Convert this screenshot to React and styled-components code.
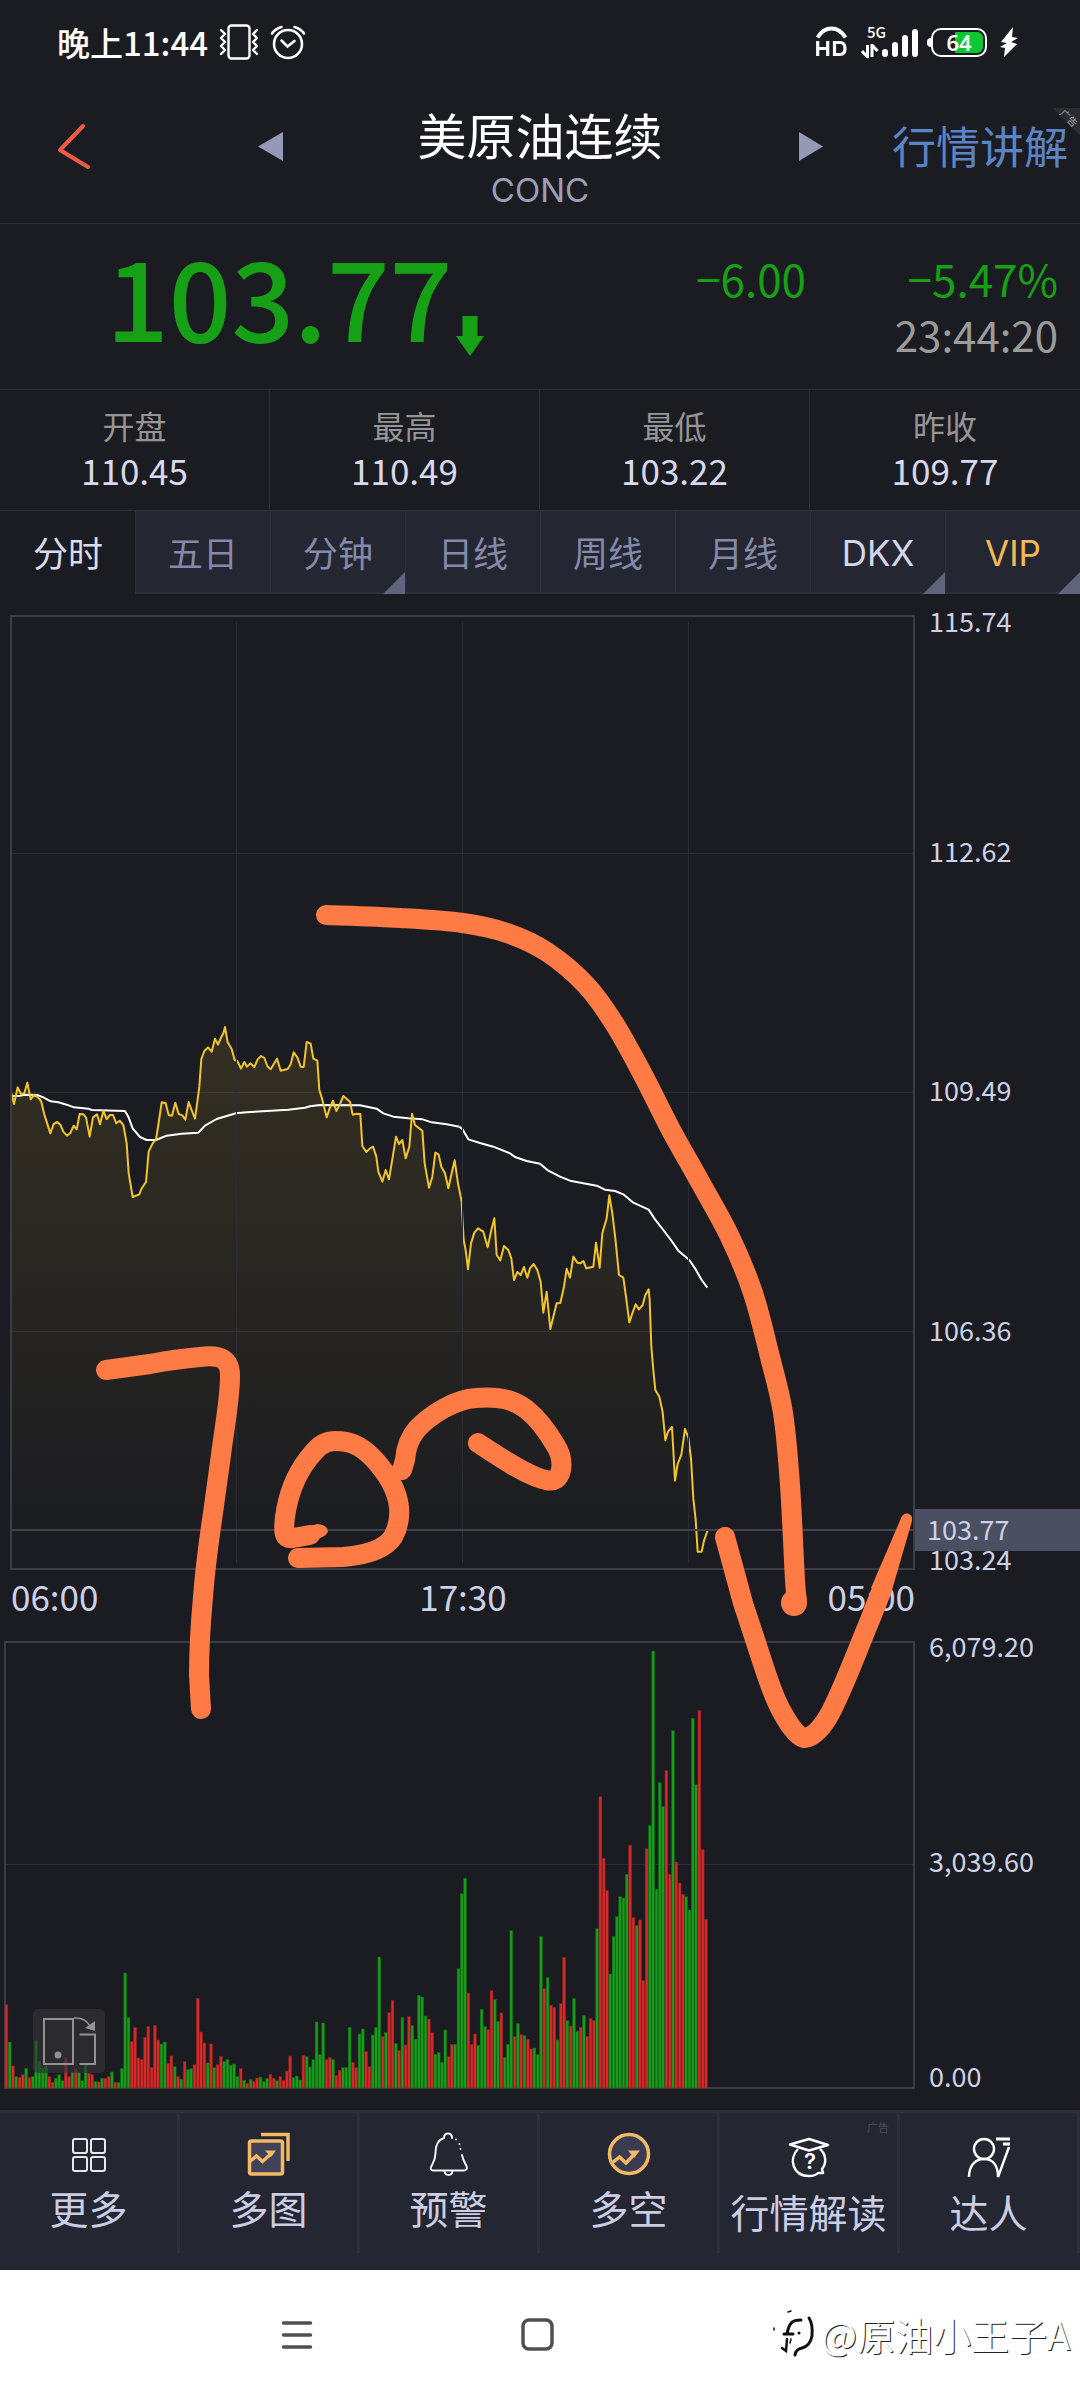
import React from "react";
import styled, { createGlobalStyle, css } from "styled-components";

const c = {
  bg: "#1b1c21",
  panel: "#242632",
  line: "#2e2f38",
  frame: "#3b3c49",
  grid: "#2b2c34",
  text: "#cdd1e8",
  muted: "#858aab",
  grey: "#959595",
  green: "#16a016",
  red: "#d22828",
  gold: "#f2ba63",
  ink: "#ff7b45",
};

const GlobalStyle = createGlobalStyle`
  * { box-sizing: border-box; }
  body {
    margin: 0;
    background: ${c.bg};
    color: ${c.text};
    font-family: "Noto Sans CJK SC", "Noto Sans", sans-serif;
  }
  button {
    margin: 0;
    padding: 0;
    border: 0;
    background: none;
    color: inherit;
    font: inherit;
    cursor: pointer;
  }
  svg { display: block; }
`;

const Screen = styled.div`
  display: flex;
  flex-direction: column;
  min-height: 100vh;
  background: ${c.bg};
`;

/* ---------- status bar ---------- */

const StatusBar = styled.div`
  display: flex;
  justify-content: space-between;
  align-items: center;
  height: 84px;
  padding: 0 61px 0 57px;
  color: #fff;
`;

const StatusGroup = styled.div`
  display: flex;
  align-items: center;
  gap: ${(p) => p.$gap}px;
`;

const Clock = styled.span`
  font-size: 33px;
  font-weight: 500;
  line-height: 40px;
`;

const VibrateIcon = () => (
  <svg width="40" height="36" viewBox="0 0 40 36" fill="none" stroke="#fff" strokeWidth="2.4" strokeLinejoin="round" strokeLinecap="round">
    <rect x="9.5" y="1.5" width="21" height="33" rx="3" />
    <path d="M2 6l4 4-4 4 4 4-4 4 4 4-4 4M38 6l-4 4 4 4-4 4 4 4-4 4 4 4" />
  </svg>
);

const AlarmIcon = () => (
  <svg width="36" height="36" viewBox="0 0 36 36" fill="none" stroke="#fff" strokeWidth="2.6" strokeLinecap="round">
    <circle cx="18" cy="20" r="14" />
    <path d="M11.5 16.5L17.5 22.5L24.500 17M2 9.500Q5 5 11.500 3M34 9.500Q31 5 24.500 3" />
  </svg>
);

const HdIcon = () => (
  <svg width="34" height="32" viewBox="0 0 34 32">
    <path d="M2.500 11.500Q8 2.500 16.500 2.500T30.500 11.500" fill="none" stroke="#fff" strokeWidth="4" />
    <path d="M2.700 15V30M12.700 15V30M2.700 22.500H12.700M19.500 16.500V28.500H25Q30 28.500 30 22.500T25 16.500Z" fill="none" stroke="#fff" strokeWidth="3.200" />
  </svg>
);

const Signal = styled.div`
  display: grid;
  grid-template-columns: 20px 36px;
  align-items: end;
  width: 58px;
`;

const Generation = styled.span`
  grid-column: 1 / -1;
  height: 12px;
  padding-left: 6px;
  margin-bottom: -12px;
  font-size: 15px;
  font-weight: 500;
  line-height: 12px;
`;

const Battery = styled.div`
  display: flex;
  align-items: center;
  justify-content: center;
  position: relative;
  width: 56px;
  height: 29px;
  border: 2px solid #fff;
  border-radius: 10px;
  font-family: "Noto Sans", sans-serif;
  font-size: 22px;
  font-weight: 600;
  line-height: 22px;
  background: linear-gradient(90deg, transparent 20px, #0bc832 20px) content-box;
  padding: 2px;

  &::before {
    content: "";
    position: absolute;
    left: -6px;
    top: 8px;
    width: 4px;
    height: 9px;
    border-radius: 4px 0 0 4px;
    background: #fff;
  }
`;

/* ---------- title bar ---------- */

const TitleBar = styled.header`
  display: grid;
  grid-template-columns: 1fr 120px 420px 120px 1fr;
  align-items: center;
  position: relative;
  height: 140px;
  padding-bottom: 13px;
  border-bottom: 1px solid ${c.line};
`;

const BackButton = styled.button`
  justify-self: start;
  padding: 8px 24px 8px 56px;
`;

const StepButton = styled.button`
  justify-self: center;
  padding: 12px;
`;

const TitleStack = styled.div`
  align-self: end;
  display: flex;
  flex-direction: column;
  align-items: center;
  gap: 8px;
`;

const Title = styled.h1`
  margin: 0;
  color: #fff;
  font-size: 49px;
  font-weight: 400;
  line-height: 56px;
`;

const Ticker = styled.span`
  color: #9a9fb8;
  font-family: Inter, sans-serif;
  font-size: 33px;
  line-height: 40px;
`;

const LessonLink = styled.a`
  justify-self: end;
  padding: 0 12px 4px 0;
  color: #5b84c6;
  font-size: 44px;
  line-height: 56px;
  text-decoration: none;
  white-space: nowrap;
`;

const CornerAd = styled.span`
  position: absolute;
  top: 24px;
  right: 0;
  width: 28px;
  height: 28px;
  background: linear-gradient(45deg, transparent 50%, #2c2d32 50%);
  color: #a2a2a6;
  font-size: 10px;
  line-height: 12px;

  & > span {
    position: absolute;
    top: 4px;
    left: 7px;
    transform: rotate(45deg);
    white-space: nowrap;
  }
`;

/* ---------- quote ---------- */

const Quote = styled.section`
  display: flex;
  justify-content: space-between;
  align-items: flex-start;
  padding: 20px 22px 27px 106px;
  color: ${c.green};
`;

const Price = styled.div`
  display: flex;
  align-items: flex-end;
  font-size: 110px;
  font-weight: 500;
  line-height: 100px;
`;

const DownArrow = styled.svg`
  width: 28px;
  height: 40px;
  margin: 0 0 -12px 4px;
`;

const Change = styled.div`
  display: grid;
  grid-template-columns: auto 252px;
  grid-auto-rows: 56px;
  padding-top: 6px;
  text-align: right;
  font-size: 44px;
  line-height: 56px;
`;

const QuoteTime = styled.time`
  grid-column: 1 / -1;
  color: #9b9b9b;
  font-size: 42px;
`;

const Stats = styled.dl`
  display: grid;
  grid-template-columns: repeat(4, 1fr);
  margin: 0;
  border-top: 1px solid ${c.line};
  border-bottom: 1px solid ${c.line};
`;

const Stat = styled.div`
  padding: 15px 0;
  text-align: center;
  border-right: 1px solid ${c.line};

  &:last-child { border-right: 0; }
`;

const StatLabel = styled.dt`
  color: ${c.grey};
  font-size: 32px;
  line-height: 40px;
`;

const StatValue = styled.dd`
  margin: 0;
  color: #d8d9ee;
  font-size: 35px;
  line-height: 50px;
`;

/* ---------- tabs ---------- */

const Tabs = styled.nav`
  display: grid;
  grid-template-columns: repeat(8, 1fr);
`;

const Tab = styled.button`
  position: relative;
  height: 83px;
  border-left: 1px solid ${c.line};
  border-bottom: 2px solid ${c.line};
  background: ${c.panel};
  color: ${(p) => p.$color || c.muted};
  font-size: 35px;
  line-height: 44px;
  ${(p) => p.$latin && css`
    padding-top: 3px;
    font-family: Inter, sans-serif;
  `}
  ${(p) => p.$active && css`
    border-color: transparent;
    background: ${c.bg};
    color: #dadcef;
  `}
  ${(p) => p.$menu && css`
    &::after {
      content: "";
      position: absolute;
      right: 0;
      bottom: -2px;
      border: 11px solid transparent;
      border-right-color: #5f637c;
      border-bottom-color: #5f637c;
    }
  `}
`;

/* ---------- charts ---------- */

const Charts = styled.main`
  position: relative;
`;

const PlotRow = styled.section`
  display: grid;
  grid-template-columns: minmax(0, 1fr) 165px;
  position: relative;
`;

const Plot = styled.svg`
  width: 100%;
  height: ${(p) => p.$height}px;
`;

const PriceAxis = styled.div`
  display: grid;
  grid-template-rows: 1fr 2fr 2fr 2fr 1fr;
  align-items: center;
  padding: 17px 0 7px 14px;
  font-size: 27px;
  line-height: 20px;

  & > :first-child { align-self: start; }
  & > :last-child { align-self: end; }
`;

const VolumeAxis = styled.div`
  display: flex;
  flex-direction: column;
  justify-content: space-between;
  padding: 16px 0 24px 14px;
  font-size: 27px;
  line-height: 20px;
`;

const LastPrice = styled.div`
  position: absolute;
  right: 0;
  bottom: 25px;
  width: 165px;
  height: 42px;
  padding-left: 12px;
  background: #4a4f62;
  font-size: 27px;
  line-height: 40px;
`;

const TimeAxis = styled.div`
  display: grid;
  grid-template-columns: repeat(3, 1fr);
  padding: 0 165px 4px 11px;
  font-size: 35px;
  line-height: 40px;

  & > :nth-child(2) { text-align: center; }
  & > :last-child { text-align: right; }
`;

const Annotation = styled.svg`
  position: absolute;
  inset: 0;
  width: 100%;
  height: 100%;
  pointer-events: none;
`;

const RotateButton = styled.button`
  position: absolute;
  left: 33px;
  bottom: 37px;
  width: 72px;
  height: 64px;
  border-radius: 5px;
  background: rgba(50, 50, 54, 0.66);
`;

// Series points are sampled on a grid of three units per pixel.
const PRICE =
  "34,338 42,372 53,322 63,342 73,340 82,308 92,358 103,344 118,356 124,365 132,400 151,460 161,432 172,426 181,434 190,455 201,467 211,459 221,437 230,448 239,402 250,403 258,412 269,470 279,412 291,403 300,433 310,393 320,417 330,405 339,405 349,430 359,422 370,435 380,490 386,580 398,651 418,643 424,627 438,606 446,515 458,490 468,478 475,435 485,367 497,370 506,405 516,407 526,368 536,402 547,406 556,419 566,366 576,393 585,416 590,380 598,320 604,237 613,213 624,202 635,215 645,176 654,194 662,175 670,160 675,141 683,187 695,207 704,240 712,243 723,266 733,246 741,260 751,250 763,261 773,238 783,228 793,234 802,258 812,268 831,236 842,272 863,267 872,253 881,217 892,232 902,260 911,261 920,186 932,191 940,236 952,242 958,330 965,352 980,412 990,382 999,362 1009,393 1020,372 1030,348 1050,365 1058,404 1070,401 1081,402 1087,498 1099,516 1110,505 1119,500 1129,530 1135,575 1147,605 1157,570 1167,598 1175,550 1188,470 1197,492 1207,480 1217,535 1228,500 1236,401 1245,435 1267,452 1274,550 1287,623 1297,590 1306,518 1316,524 1324,560 1335,580 1345,625 1355,580 1364,541 1374,610 1385,665 1387,710 1391,780 1397,810 1404,868 1413,790 1423,758 1434,745 1450,755 1463,802 1474,750 1483,715 1490,825 1501,841 1512,798 1525,810 1534,835 1542,900 1552,876 1562,885 1572,861 1582,893 1590,865 1601,852 1612,870 1622,905 1630,998 1640,935 1651,1047 1660,1010 1670,970 1681,969 1692,920 1700,866 1710,893 1720,830 1732,848 1742,850 1750,843 1759,865 1780,860 1788,788 1799,863 1807,760 1820,715 1828,646 1837,700 1846,775 1857,885 1870,893 1878,950 1888,1027 1897,1000 1907,973 1917,988 1928,975 1936,945 1946,928 1949,960 1954,1100 1960,1170 1966,1230 1978,1250 1988,1297 1996,1381 2004,1355 2016,1341 2020,1412 2025,1502 2033,1452 2044,1424 2055,1347 2065,1372 2073,1435 2080,1556 2087,1619 2093,1715 2105,1715 2112,1682 2118,1665 2123,1650";

const AVERAGE =
  "34,348 60,347 75,344 112,345 130,352 152,364 175,367 200,374 222,382 265,386 275,390 375,393 385,410 398,445 420,471 440,480 468,480 500,467 545,461 595,458 615,437 650,417 708,400 740,397 865,389 915,383 930,379 960,375 1080,376 1130,386 1150,400 1180,410 1225,415 1268,418 1295,427 1340,433 1378,440 1387,447 1405,478 1440,489 1480,500 1530,520 1545,531 1580,543 1620,551 1645,572 1680,590 1710,602 1750,610 1790,617 1815,629 1845,633 1870,643 1900,668 1946,689 1965,718 1990,750 2015,783 2035,812 2068,840 2085,865 2105,900 2122,923";

// r = up bar, g = down bar, followed by its height in thirds of a pixel.
const VOLUME =
  "r250 g138 r66 g34 r31 r40 g59 r31 g34 g142 g79 g59 g66 r34 r17 g29 g40 g22 r91 r34 g48 r57 g48 g22 g70 r44 r40 g19 r18 g29 r29 r34 g48 r17 g17 g58 g345 g211 r139 r181 r90 r85 r152 r184 r61 r188 r144 g132 g138 r73 r96 g64 r34 g26 r79 g55 g58 r70 r269 r168 r135 g75 r132 g61 r70 r94 g79 g86 g68 g72 g34 r58 g23 r14 g25 r19 r30 g33 g19 g28 r41 r29 g22 r34 r23 r51 r96 g31 g36 g24 r97 g94 g63 g85 g198 g100 g195 r85 r91 g85 r37 r53 g61 g61 g181 r77 r61 g162 g177 r109 r64 g159 g181 g393 r154 g167 r226 r263 g133 r112 g211 r129 r214 g187 g146 g278 g273 g216 r207 r166 g101 g106 g77 g174 r95 r131 g131 g358 g583 g629 r285 r131 r162 g128 g236 g184 r175 r292 g265 g200 r225 g91 g131 g472 r154 g193 r160 g157 r146 r117 g120 g100 g455 r298 g331 r248 r241 g144 r253 r392 g202 r186 g268 g170 r182 g217 r155 r208 r202 g478 r874 r688 r592 g342 g455 g514 g574 g570 g641 r728 r511 g487 r504 r322 r718 g787 g1311 g596 g916 g844 r952 r641 g1072 r678 r615 r581 g574 g534 g1109 g910 r1133 r715 r506"
    .split(" ")
    .map((s) => ({ up: s[0] === "r", h: Number(s.slice(1)) / 3 }));

function PricePlot() {
  return (
    <Plot $height={982} viewBox="0 594 915 982" preserveAspectRatio="none" role="img" aria-label="分时走势图">
      <defs>
        <linearGradient id="area" gradientUnits="userSpaceOnUse" x1="0" y1="140" x2="0" y2="1700">
          <stop offset="0" stopColor="#f5c52f" stopOpacity="0.115" />
          <stop offset="1" stopColor="#f5c52f" stopOpacity="0" />
        </linearGradient>
      </defs>
      <path d="M11 853.500H914M11 1092.500H914M11 1331.500H914" stroke={c.grid} fill="none" />
      <g transform="translate(0 980) scale(0.333333)" fill="none" strokeLinejoin="round">
        <polygon points={`34,1765 ${PRICE} 2123,1765`} fill="url(#area)" />
        <polyline points={AVERAGE} stroke="#fff" strokeWidth="6" />
        <polyline points={PRICE} stroke="#f2c42c" strokeWidth="6" />
      </g>
      <path d="M236.500 622V1563M462.500 622V1563M688.500 622V1563" stroke={c.grid} fill="none" />
      <path d="M11 1530H914" stroke="#41424e" strokeWidth="2" />
      <rect x="11" y="616" width="903" height="953" fill="none" stroke={c.frame} strokeWidth="2" />
    </Plot>
  );
}

function VolumePlot() {
  return (
    <Plot $height={490} viewBox="0 1620 915 490" preserveAspectRatio="none" role="img" aria-label="成交量">
      <path d="M5 1864.500H914" stroke={c.grid} />
      <rect x="5" y="1642" width="909" height="446" fill="none" stroke={c.frame} strokeWidth="2" />
      {VOLUME.map((b, i) => (
        <rect
          key={i}
          x={5 + i * 3.3}
          y={2088 - b.h}
          width="2.8"
          height={b.h}
          fill={b.up ? "#d42a2a" : "#1a9b1c"}
          stroke={b.up ? "#8e1f20" : "#0d6a10"}
          strokeWidth="0.5"
        />
      ))}
    </Plot>
  );
}

// Joins points with a Catmull-Rom curve.
function smooth(pts) {
  let d = `M${pts[0].join(" ")}`;
  for (let i = 0; i < pts.length - 1; i += 1) {
    const [p0, p1, p2, p3] = [pts[i - 1] || pts[i], pts[i], pts[i + 1], pts[i + 2] || pts[i + 1]];
    d += `C${p1[0] + (p2[0] - p0[0]) / 6} ${p1[1] + (p2[1] - p0[1]) / 6} ${p2[0] - (p3[0] - p1[0]) / 6} ${p2[1] - (p3[1] - p1[1]) / 6} ${p2[0]} ${p2[1]}`;
  }
  return d;
}

const ARROW = smooth([
  [326, 915], [400, 918], [463, 923], [507, 933], [547, 952], [586, 985], [614, 1023],
  [642, 1073], [671, 1130], [699, 1180], [730, 1237], [753, 1293], [770, 1357],
  [783, 1413], [790, 1485], [795, 1580], [797, 1600],
]);

const Strokes = () => (
  <Annotation viewBox="0 594 1080 1516" preserveAspectRatio="none" aria-hidden="true">
    <g fill="none" stroke={c.ink} strokeWidth="20" strokeLinecap="round" strokeLinejoin="round">
      <path d={ARROW} />
      <path d="M106 1370L150 1364Q176 1359 200 1357C222 1354 230 1360 230 1376C230 1400 224 1430 221 1455L213 1513C209 1540 205 1570 203 1597C200 1630 199 1650 199 1675L201 1709" />
      <path d="M298 1558L343 1557C368 1555 385 1549 393 1537C398 1528 400 1518 399 1507C397 1488 386 1472 373 1458C360 1445 350 1441 335 1441C322 1441 316 1449 308 1459C295 1476 288 1495 285 1517C283 1534 284 1539 293 1538L310 1535" />
      <path d="M402 1470L405 1460C406 1446 411 1436 417 1429C430 1415 455 1399 476 1398C500 1396 514 1400 526 1409C540 1420 549 1434 556 1446C562 1456 562 1464 561 1470C559 1479 554 1482 546 1480C530 1477 505 1461 478 1443" />
      <path d="M725 1537L743 1603L763 1664Q774 1698 782 1712Q795 1736 804 1738Q816 1737 828 1717C840 1697 857 1651 870 1620L881 1592" />
    </g>
    <g fill={c.ink}>
      <circle cx="794" cy="1603" r="13" />
      <path d="M300 1528L318 1524Q327 1525 328 1531Q327 1535 322 1537L312 1543L300 1546Z" />
      <path d="M871 1588L902 1516Q907 1510 912 1517V1521L890 1597Z" />
    </g>
  </Annotation>
);

/* ---------- bottom toolbar ---------- */

const Toolbar = styled.nav`
  display: grid;
  grid-template-columns: repeat(6, 1fr);
  height: 160px;
  padding-bottom: 17px;
  border-top: 3px solid #2d2f3a;
  background: ${c.panel};
`;

const Tool = styled.button`
  display: flex;
  flex-direction: column;
  align-items: center;
  gap: ${(p) => (p.$low ? 10 : 6)}px;
  position: relative;
  padding-top: 18px;
  border-right: 3px solid #2d2f3a;
  color: #cacde4;
  font-size: 39px;
  line-height: 44px;
  white-space: nowrap;
`;

const AdTag = styled.small`
  position: absolute;
  top: 7px;
  right: 8px;
  color: #4b4d59;
  font-size: 11px;
  line-height: 14px;
`;

const icons = {
  more: (
    <g stroke="#e8e8ec" strokeWidth="2">
      <rect x="8" y="8" width="14" height="14" rx="2" />
      <rect x="26" y="8" width="14" height="14" rx="2" />
      <rect x="8" y="26" width="14" height="14" rx="2" />
      <rect x="26" y="26" width="14" height="14" rx="2" />
    </g>
  ),
  charts: (
    <g stroke={c.gold} strokeWidth="3.500">
      <rect x="4.500" y="10" width="33" height="33" rx="2" fill="#41425a" />
      <path d="M16 3.500H43V30" />
      <path d="M4 31L11.500 25L17.500 30.500L27 22" />
      <path d="M20 19.500H31L26 26Z" fill={c.gold} stroke="none" />
    </g>
  ),
  bell: (
    <g stroke="#f2f2f4" strokeWidth="2" strokeLinecap="round">
      <path d="M27 7Q27 2.500 23 2.500T19 7C12 9 10.500 16 10.500 22C10.500 29 8 32 6 36Q5 39 8 39.500H39Q43 39 41.500 35C39.500 31 38 29 37 24" />
      <path d="M31 8.500v.1M34.500 13v.1M35.500 18v.1" />
      <path d="M19.500 40Q20 44 23.500 44T27.500 40" />
    </g>
  ),
  longShort: (
    <g stroke={c.gold} strokeWidth="3.500">
      <circle cx="24" cy="23" r="19.500" fill="#3b3c52" />
      <path d="M7 32L14.500 26L21 32L30 22.500" />
      <path d="M23 19.500H35L29 27Z" fill={c.gold} stroke="none" />
    </g>
  ),
  lesson: (
    <g stroke="#fff" strokeWidth="2.400" strokeLinejoin="round">
      <path d="M5 13.500L24 8L43 14L24 19.500Z" />
      <path d="M13 18C3 28 8 45 24 45C28 45 31 44 33 42H38L37 38C42 32 41 23 35 18" />
      <text x="25" y="38" textAnchor="middle" fill="#fff" stroke="none" fontFamily="Inter, sans-serif" fontSize="22" fontWeight="600">?</text>
    </g>
  ),
  expert: (
    <g stroke="#fff" strokeWidth="2.400">
      <circle cx="19" cy="18" r="10" />
      <path d="M4 46C4 36 9 28 19 28S33 36 33 46L44 16" />
      <path d="M31 8H45M38 13H45" strokeWidth="3" />
    </g>
  ),
};

const tools = [
  { icon: "more", label: "更多" },
  { icon: "charts", label: "多图" },
  { icon: "bell", label: "预警" },
  { icon: "longShort", label: "多空" },
  { icon: "lesson", label: "行情解读", low: true, ad: true },
  { icon: "expert", label: "达人", low: true },
];

/* ---------- system navigation ---------- */

const SystemNav = styled.footer`
  flex: 1;
  display: grid;
  grid-template-columns: 1fr 1fr;
  align-items: center;
  justify-items: center;
  position: relative;
  min-height: 130px;
  padding: 0 422px 0 176px;
  background: #fff;
`;

const Watermark = styled.div`
  display: flex;
  align-items: center;
  gap: 4px;
  position: absolute;
  right: 10px;
  top: 38px;
  color: #fff;
  font-size: 38px;
  font-weight: 400;
  line-height: 52px;
  text-shadow: 1px 1px 0 #222;
  white-space: nowrap;
`;

const stats = [
  ["开盘", "110.45"],
  ["最高", "110.49"],
  ["最低", "103.22"],
  ["昨收", "109.77"],
];

const tabs = [
  { label: "分时", active: true },
  { label: "五日" },
  { label: "分钟", menu: true },
  { label: "日线" },
  { label: "周线" },
  { label: "月线" },
  { label: "DKX", menu: true, latin: true, color: "#d3d6ea" },
  { label: "VIP", menu: true, latin: true, color: "#f5b955" },
];

export default function App() {
  return (
    <Screen>
      <GlobalStyle />
      <StatusBar>
        <StatusGroup $gap={11}>
          <Clock>晚上11:44</Clock>
          <VibrateIcon />
          <AlarmIcon />
        </StatusGroup>
        <StatusGroup $gap={12}>
          <HdIcon />
          <Signal>
            <Generation>5G</Generation>
            <svg width="18" height="14" viewBox="0 0 18 14" fill="none" stroke="#fff" strokeWidth="3">
              <path d="M6.500 1V13L1 7M11 13V1L16.500 7" />
            </svg>
            <svg width="38" height="32" viewBox="0 0 38 32" fill="#fff">
              <rect x="1" y="23" width="6" height="8" rx="3" />
              <rect x="11" y="16" width="6" height="15" rx="3" />
              <rect x="21" y="9" width="6" height="22" rx="3" />
              <rect x="31" y="3" width="6" height="28" rx="3" />
            </svg>
          </Signal>
          <Battery>64</Battery>
          <svg width="20" height="32" viewBox="0 0 20 32" fill="#fff">
            <path d="M14 1L2 16L8 17L1 21L6 22L5 31L18 18L12 16L19 12L13 11Z" />
          </svg>
        </StatusGroup>
      </StatusBar>

      <TitleBar>
        <BackButton aria-label="返回">
          <svg width="36" height="48" viewBox="0 0 36 48" fill="none" stroke="#ef5a45" strokeWidth="4" strokeLinecap="round" strokeLinejoin="round">
            <path d="M27 3L4 27L32 44" />
          </svg>
        </BackButton>
        <StepButton aria-label="上一个">
          <svg width="26" height="30" viewBox="0 0 26 30" fill="#949ab5"><path d="M26 0V29L1 14.500Z" /></svg>
        </StepButton>
        <TitleStack>
          <Title>美原油连续</Title>
          <Ticker>CONC</Ticker>
        </TitleStack>
        <StepButton aria-label="下一个">
          <svg width="26" height="30" viewBox="0 0 26 30" fill="#949ab5"><path d="M2 0V29L26 14.500Z" /></svg>
        </StepButton>
        <LessonLink href="#lesson">行情讲解</LessonLink>
        <CornerAd><span>广告</span></CornerAd>
      </TitleBar>

      <Quote>
        <Price>
          103.77
          <DownArrow viewBox="0 0 28 40" fill={c.green}>
            <path d="M6.500 0H21.500V20H28L14 40L0 20H6.500Z" />
          </DownArrow>
        </Price>
        <Change>
          <span>−6.00</span>
          <span>−5.47%</span>
          <QuoteTime>23:44:20</QuoteTime>
        </Change>
      </Quote>

      <Stats>
        {stats.map(([label, value]) => (
          <Stat key={label}>
            <StatLabel>{label}</StatLabel>
            <StatValue>{value}</StatValue>
          </Stat>
        ))}
      </Stats>

      <Tabs>
        {tabs.map((t) => (
          <Tab key={t.label} $active={t.active} $menu={t.menu} $latin={t.latin} $color={t.color}>
            {t.label}
          </Tab>
        ))}
      </Tabs>

      <Charts>
        <PlotRow>
          <PricePlot />
          <PriceAxis>
            <span>115.74</span>
            <span>112.62</span>
            <span>109.49</span>
            <span>106.36</span>
            <span>103.24</span>
          </PriceAxis>
          <LastPrice>103.77</LastPrice>
        </PlotRow>
        <TimeAxis>
          <span>06:00</span>
          <span>17:30</span>
          <span>05:00</span>
        </TimeAxis>
        <PlotRow>
          <VolumePlot />
          <VolumeAxis>
            <span>6,079.20</span>
            <span>3,039.60</span>
            <span>0.00</span>
          </VolumeAxis>
        </PlotRow>
        <RotateButton aria-label="横屏">
          <svg width="72" height="64" viewBox="0 0 72 64" fill="none" stroke="#929295" strokeWidth="2">
            <rect x="11" y="10" width="29" height="45" />
            <path d="M46.500 25.500H62V55H46.500" />
            <path d="M41 9Q52 8 57 17" strokeWidth="1.500" />
            <path d="M62 12V22L52 19Z" fill="#929295" stroke="none" />
            <circle cx="25" cy="46" r="3.500" fill="#929295" stroke="none" />
          </svg>
        </RotateButton>
        <Strokes />
      </Charts>

      <Toolbar>
        {tools.map((t) => (
          <Tool key={t.label} $low={t.low}>
            <svg width="48" height="48" viewBox="0 0 48 48" fill="none" aria-hidden="true">{icons[t.icon]}</svg>
            {t.label}
            {t.ad && <AdTag>广告</AdTag>}
          </Tool>
        ))}
      </Toolbar>

      <SystemNav>
        <button aria-label="最近任务">
          <svg width="32" height="32" viewBox="0 0 32 32" stroke="#505050" strokeWidth="3.500" strokeLinecap="round">
            <path d="M2.500 4H29.500M2.500 16H29.500M2.500 28H29.500" />
          </svg>
        </button>
        <button aria-label="主屏幕">
          <svg width="34" height="34" viewBox="0 0 34 34" fill="none" stroke="#505050" strokeWidth="3.500">
            <rect x="2" y="2" width="29" height="29" rx="6" />
          </svg>
        </button>
        <Watermark>
          <svg width="44" height="50" viewBox="0 0 44 50" fill="none" stroke="#111" strokeLinecap="round">
            <path d="M11 25H20M14 25C16 14 19 11 28 11" strokeWidth="3" />
            <path d="M36 9Q40 15 39 27Q37 37 29 39Q23 40 22 46" strokeWidth="3" />
            <path d="M14 30L13 42L9 39" strokeWidth="2.500" />
            <path d="M18 30L17 34M15 3L18 2M1 19V21" strokeWidth="1.500" />
            <circle cx="26" cy="24" r="1.500" fill="#111" stroke="none" />
          </svg>
          @原油小王子A
        </Watermark>
      </SystemNav>
    </Screen>
  );
}
